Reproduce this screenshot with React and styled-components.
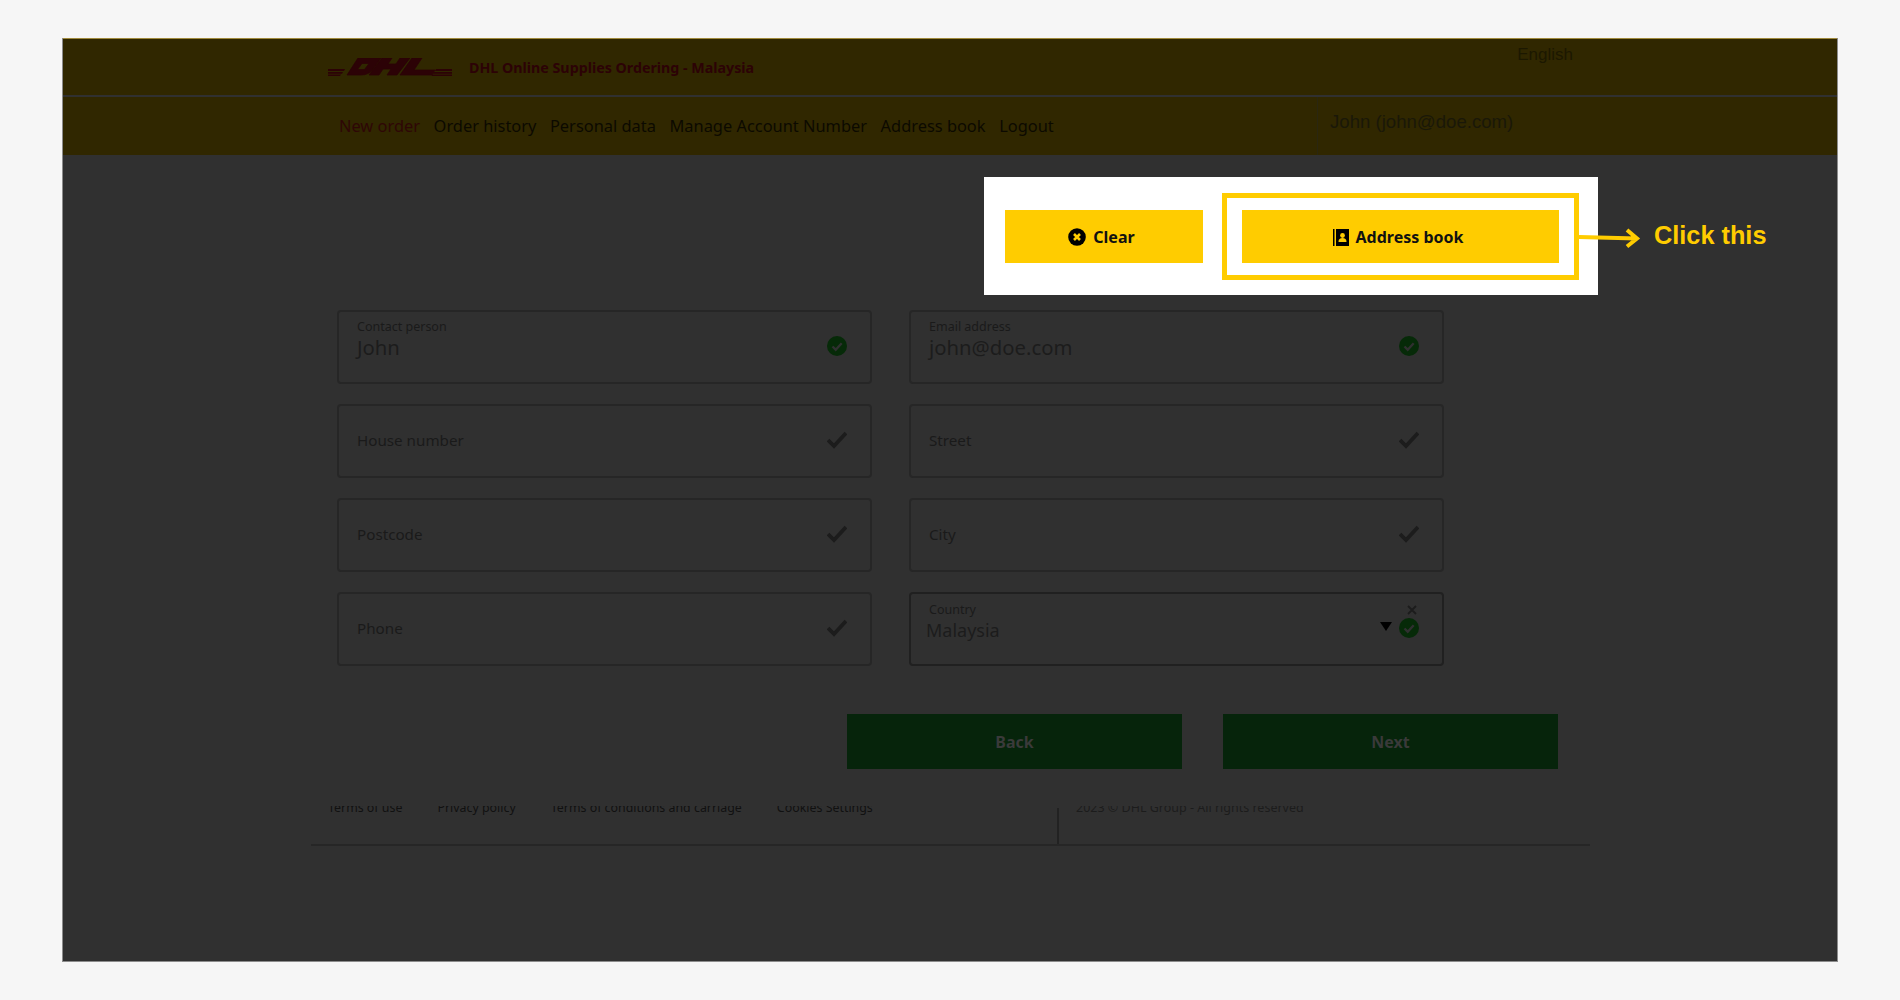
import React from "react";
import styled, { createGlobalStyle } from "styled-components";

const GlobalStyle = createGlobalStyle`
  html, body {
    margin: 0;
    padding: 0;
    background: #f6f6f6;
  }
  * {
    box-sizing: border-box;
  }
`;

const Page = styled.div`
  width: 1900px;
  height: 1000px;
  padding: 38px 62px;
  font-family: "Noto Sans", sans-serif;
`;

const Screen = styled.div`
  position: relative;
  width: 1776px;
  height: 924px;
  background: #303030;
  border-left: 1px solid #8c8c8c;
  border-bottom: 1px solid #8c8c8c;
  border-right: 1px solid #8c8c8c;
`;

const TopBar = styled.div`
  height: 59px;
  display: flex;
  align-items: flex-start;
  justify-content: space-between;
  background: #302700;
  border-top: 1px solid #a08a3c;
  border-bottom: 2px solid #303030;
  padding-left: 265px;
`;

const Brand = styled.div`
  display: flex;
  align-items: center;
  gap: 17px;
  padding-top: 17px;
`;

const BrandTitle = styled.span`
  font-size: 14.25px;
  font-weight: 700;
  color: #2c0206;
  padding-top: 2px;
`;

const Language = styled.span`
  font-family: "Liberation Sans", sans-serif;
  font-size: 17px;
  color: #1c1800;
  margin: 6px 264px 0 0;
`;

const NavBar = styled.div`
  height: 58px;
  display: flex;
  align-items: stretch;
  justify-content: space-between;
  background: #302700;
  padding-left: 276px;
`;

const NavLinks = styled.nav`
  display: flex;
  align-items: center;
  gap: 13.6px;
  padding-bottom: 2px;
`;

const NavLink = styled.a`
  font-size: 16.4px;
  color: ${(props) => (props.$active ? "#2e0606" : "#0c0a00")};
`;

const UserBox = styled.div`
  width: 520px;
  display: flex;
  align-items: center;
  border-left: 1px solid #2a2610;
  padding: 0 0 8px 12px;
  font-family: "Liberation Sans", sans-serif;
  font-size: 18.6px;
  color: #1a1808;
`;

const Main = styled.main`
  padding: 155px 0 0 274px;
`;

const FormGrid = styled.div`
  width: 1107px;
  display: grid;
  grid-template-columns: 535px 535px;
  column-gap: 37px;
  row-gap: 20px;
`;

const Field = styled.div`
  position: relative;
  height: 74px;
  display: flex;
  align-items: center;
  justify-content: space-between;
  padding: 0 23px 2px ${(props) => (props.$select ? "15px" : "18px")};
  border: 2px solid ${(props) => (props.$select ? "#202020" : "#262626")};
  border-radius: 4px;
`;

const FieldText = styled.div`
  display: flex;
  flex-direction: column;
  margin-bottom: ${(props) => (props.$select ? "12px" : "14px")};
`;

const FloatLabel = styled.span`
  font-size: 12.5px;
  line-height: 15px;
  color: #1a1a1a;
  margin-left: ${(props) => (props.$select ? "3px" : "0")};
`;

const FieldValue = styled.span`
  font-size: ${(props) => (props.$select ? "18px" : "20.3px")};
  line-height: 26px;
  color: #1c1c1c;
`;

const EmptyLabel = styled.span`
  font-size: 15.2px;
  color: #1a1a1a;
`;

const FieldIcons = styled.div`
  display: flex;
  align-items: center;
  gap: 7px;
`;

const Caret = styled.span`
  width: 0;
  height: 0;
  border-left: 6px solid transparent;
  border-right: 6px solid transparent;
  border-top: 9px solid #000000;
  margin-top: -4px;
`;

const ClearMark = styled.svg`
  position: absolute;
  right: 25px;
  top: 11px;
`;

const Actions = styled.div`
  display: flex;
  gap: 41px;
  margin: 48px 0 0 510px;
`;

const SubmitButton = styled.button`
  width: 335px;
  height: 55px;
  border: none;
  background: #06240b;
  color: #3a3a3a;
  font-family: inherit;
  font-size: 16px;
  font-weight: 700;
`;

const Footer = styled.footer`
  width: 1279px;
  height: 40px;
  margin: 37px 0 0 -26px;
  display: flex;
  overflow: hidden;
  border-bottom: 2px solid #262626;
`;

const FooterLinks = styled.div`
  width: 746px;
  display: flex;
  gap: 35px;
  padding-left: 17px;
  margin-top: -7px;
`;

const FooterLink = styled.a`
  font-size: 12.4px;
  line-height: 18px;
  color: #111111;
`;

const Copyright = styled.div`
  flex: 1;
  padding-left: 17px;
  border-left: 2px solid #222222;
  font-size: 12.5px;
  line-height: 18px;
  color: #1c1c1c;
  margin-top: 2px;

  span {
    display: block;
    margin-top: -9px;
  }
`;

const Callout = styled.div`
  position: absolute;
  left: 921px;
  top: 139px;
  display: flex;
  align-items: center;
`;

const WhiteBox = styled.div`
  width: 614px;
  height: 118px;
  display: flex;
  align-items: center;
  gap: 19px;
  padding-left: 21px;
  background: #ffffff;
`;

const Highlight = styled.div`
  width: 357px;
  height: 87px;
  display: flex;
  align-items: center;
  justify-content: center;
  border: 5px solid #ffcc00;
`;

const ActionButton = styled.button`
  width: ${(props) => props.$width}px;
  height: 53px;
  display: flex;
  align-items: center;
  justify-content: center;
  gap: 7px;
  padding: 2px 5px 0 0;
  border: none;
  background: #ffcc00;
  color: #111111;
  font-family: inherit;
  font-size: 16px;
  font-weight: 700;
`;

const CalloutArrow = styled.svg`
  position: absolute;
  left: 595px;
  top: 50px;
`;

const CalloutText = styled.span`
  position: absolute;
  left: 670px;
  top: 44px;
  font-family: "Liberation Sans", sans-serif;
  font-size: 25.3px;
  font-weight: 700;
  color: #ffcc00;
  white-space: nowrap;
`;

const DhlLogo = () => (
  <svg width="124" height="18" viewBox="0 0 124 18">
    <g fill="#2c0206">
      <path
        fillRule="evenodd"
        stroke="#2c0206"
        strokeWidth="0.800"
        d="M30 0H53L45 11Q41 17 33 17H19zM34 5.500H41L36.500 11.500H29.500z"
      />
      <path stroke="#2c0206" strokeWidth="0.800" d="M54 0h10l-4 6h8l4-6h10L69 17h-10l4-6h-8l-4 6h-10z" />
      <path stroke="#2c0206" strokeWidth="0.800" d="M84 0h10l-8 12h21l-3 5H72z" />
      <path d="M0 11h17l-1 2h-16zM0 14h15l-1 1.800h-14zM0 16.500h13l-1 1.500h-12z" />
      <path d="M108 11h16v2h-17zM106 14h18v1.800h-19zM104.500 16.500h19.500v1.500h-20.500z" />
    </g>
  </svg>
);

const CheckMark = () => (
  <svg width="20" height="20" viewBox="0 0 20 20">
    <path d="M1 10l6 6 12-13" fill="none" stroke="#1c1c1c" strokeWidth="3.800" />
  </svg>
);

const CheckBadge = () => (
  <svg width="20" height="20" viewBox="0 0 20 20">
    <circle cx="10" cy="10" r="10" fill="#062a08" />
    <path d="M5.500 10.500l3.200 3.200 6-6.400" fill="none" stroke="#303030" strokeWidth="2.400" />
  </svg>
);

const ClearIcon = () => (
  <svg width="18" height="18" viewBox="0 0 18 18">
    <circle cx="9" cy="9" r="8.800" fill="#000000" />
    <path d="M6 6l6 6M12 6l-6 6" stroke="#ffcc00" strokeWidth="2.600" />
  </svg>
);

const BookIcon = () => (
  <svg width="16" height="17" viewBox="0 0 16 17">
    <rect x="0" y="0" width="1.500" height="17" fill="#000000" />
    <rect x="3" y="0" width="13" height="17" fill="#000000" />
    <circle cx="9.500" cy="6.500" r="2.400" fill="#ffcc00" />
    <path d="M5.500 13c0-3 1.500-4 4-4s4 1 4 4z" fill="#ffcc00" />
  </svg>
);

const navItems = [
  "New order",
  "Order history",
  "Personal data",
  "Manage Account Number",
  "Address book",
  "Logout",
];

const footerItems = [
  "Terms of use",
  "Privacy policy",
  "Terms of conditions and carriage",
  "Cookies Settings",
];

const App = () => {
  return (
    <Page>
      <GlobalStyle />
      <Screen>
        <TopBar>
          <Brand>
            <DhlLogo />
            <BrandTitle>DHL Online Supplies Ordering - Malaysia</BrandTitle>
          </Brand>
          <Language>English</Language>
        </TopBar>
        <NavBar>
          <NavLinks>
            {navItems.map((item, index) => (
              <NavLink key={item} $active={index === 0}>
                {item}
              </NavLink>
            ))}
          </NavLinks>
          <UserBox>John (john@doe.com)</UserBox>
        </NavBar>
        <Main>
          <FormGrid>
            <Field>
              <FieldText>
                <FloatLabel>Contact person</FloatLabel>
                <FieldValue>John</FieldValue>
              </FieldText>
              <CheckBadge />
            </Field>
            <Field>
              <FieldText>
                <FloatLabel>Email address</FloatLabel>
                <FieldValue>john@doe.com</FieldValue>
              </FieldText>
              <CheckBadge />
            </Field>
            <Field>
              <EmptyLabel>House number</EmptyLabel>
              <CheckMark />
            </Field>
            <Field>
              <EmptyLabel>Street</EmptyLabel>
              <CheckMark />
            </Field>
            <Field>
              <EmptyLabel>Postcode</EmptyLabel>
              <CheckMark />
            </Field>
            <Field>
              <EmptyLabel>City</EmptyLabel>
              <CheckMark />
            </Field>
            <Field>
              <EmptyLabel>Phone</EmptyLabel>
              <CheckMark />
            </Field>
            <Field $select>
              <FieldText $select>
                <FloatLabel $select>Country</FloatLabel>
                <FieldValue $select>Malaysia</FieldValue>
              </FieldText>
              <FieldIcons>
                <Caret />
                <CheckBadge />
              </FieldIcons>
              <ClearMark width="10" height="10" viewBox="0 0 10 10">
                <path d="M1 1l8 8M9 1l-8 8" stroke="#1c1c1c" strokeWidth="1.800" />
              </ClearMark>
            </Field>
          </FormGrid>
          <Actions>
            <SubmitButton>Back</SubmitButton>
            <SubmitButton>Next</SubmitButton>
          </Actions>
          <Footer>
            <FooterLinks>
              {footerItems.map((item) => (
                <FooterLink key={item}>{item}</FooterLink>
              ))}
            </FooterLinks>
            <Copyright>
              <span>2023 © DHL Group - All rights reserved</span>
            </Copyright>
          </Footer>
        </Main>
        <Callout>
          <WhiteBox>
            <ActionButton $width={198}>
              <ClearIcon />
              Clear
            </ActionButton>
            <Highlight>
              <ActionButton $width={317}>
                <BookIcon />
                Address book
              </ActionButton>
            </Highlight>
          </WhiteBox>
          <CalloutArrow width="62" height="22" viewBox="0 0 62 22">
            <path d="M0 10l58 1.500M48 3l10 8.500-10 8" fill="none" stroke="#ffcc00" strokeWidth="4" />
          </CalloutArrow>
          <CalloutText>Click this</CalloutText>
        </Callout>
      </Screen>
    </Page>
  );
};

export default App;
